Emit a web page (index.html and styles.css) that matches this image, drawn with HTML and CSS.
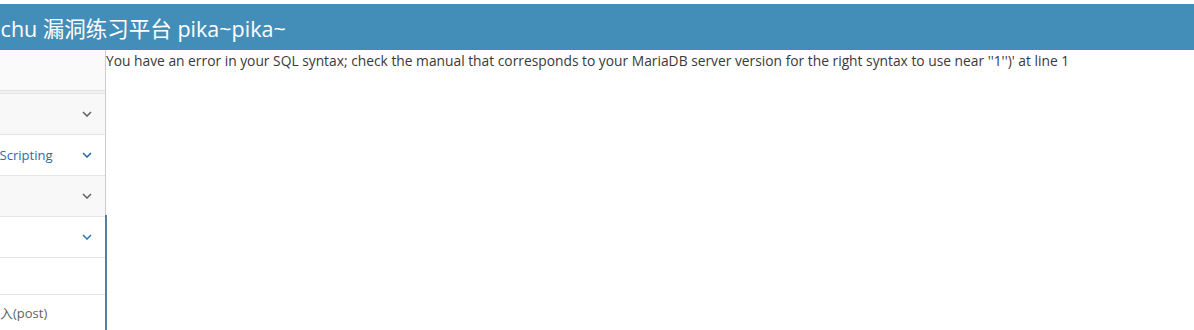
FILE: index.html
```html
<!DOCTYPE html>
<html lang="zh-CN">
<head>
    <meta charset="UTF-8">
    <title>Pikachu 漏洞练习平台</title>
    <link rel="stylesheet" href="styles.css">
</head>
<body>
    <div class="navbar">
        <span class="brand">Pikachu 漏洞练习平台 pika~pika~</span>
    </div>

    <div class="main">
        <div class="sidebar">
            <div class="sidebar-inner">
                <div class="shortcuts"></div>
                <ul class="nav-list">
                    <li><a href="#"><span class="text">暴力破解</span><svg class="arrow" viewBox="0 0 10 6"><path d="M1 1l4 4 4-4"/></svg></a></li>
                    <li class="hover"><a href="#"><span class="text">Cross-Site Scripting</span><svg class="arrow" viewBox="0 0 10 6"><path d="M1 1l4 4 4-4"/></svg></a></li>
                    <li><a href="#"><span class="text">CSRF</span><svg class="arrow" viewBox="0 0 10 6"><path d="M1 1l4 4 4-4"/></svg></a></li>
                    <li class="open"><a href="#"><span class="text">SQL-Inject</span><svg class="arrow" viewBox="0 0 10 6"><path d="M1 1l4 4 4-4"/></svg></a>
                        <ul class="submenu">
                            <li><a href="#">概述</a></li>
                            <li><a href="#">数字型注入(post)</a></li>
                        </ul>
                    </li>
                </ul>
            </div>
        </div>

        <div class="content">
            You have an error in your SQL syntax; check the manual that corresponds to your MariaDB server version for the right syntax to use near ''1'')' at line 1
        </div>
    </div>
</body>
</html>
```

FILE: styles.css
```css
body {
    margin: 0;
    background: #fff;
    font-family: "Open Sans", "Noto Sans CJK SC", sans-serif;
    font-size: 13.8px;
    color: #393939;
    overflow: hidden;
}
.navbar {
    margin-top: 4px;
    height: 46px;
    background: #438eb9;
    color: #fff;
    display: flex;
    align-items: center;
    overflow: hidden;
}
.brand {
    font-size: 21.5px;
    margin-left: -41px;
    white-space: nowrap;
}
.main {
    display: flex;
    position: relative;
}
/* blue bar of the active (open) menu */
.main::after {
    content: "";
    position: absolute;
    left: 105px;
    top: 165px;
    bottom: 0;
    width: 2px;
    background: #4f80a6;
}
.sidebar {
    width: 105px;
    flex-shrink: 0;
    overflow: hidden;
    background: #f2f2f2;
    border-right: 1px solid #ccc;
    height: 280px;
    font-size: 13px;
}
.sidebar-inner {
    width: 190px;
    margin-left: -85px;
}
.shortcuts {
    height: 40px;
    background: #fafafa;
    border-bottom: 1px solid #e0e0e0;
    margin-bottom: 2px;
}
.nav-list {
    list-style: none;
    margin: 0;
    padding: 0;
}
.nav-list > li {
    border-top: 1px solid #e5e5e5;
}
.nav-list > li > a {
    display: flex;
    align-items: center;
    height: 40px;
    padding-left: 21px;
    background: #f8f8f8;
    color: #585858;
    text-decoration: none;
    white-space: nowrap;
}
.nav-list .text {
    flex: 1;
}
.arrow {
    width: 10px;
    height: 6px;
    margin-right: 13px;
    fill: none;
    stroke: #666;
    stroke-width: 1.6;
}
.nav-list > li.hover > a {
    background: #fff;
    color: #266cad;
}
.nav-list > li.hover .arrow {
    stroke: #266cad;
}
.nav-list > li.open > a {
    background: #fff;
    color: #2b7dbc;
}
.nav-list > li.open > a .arrow {
    stroke: #2b7dbc;
}
.submenu {
    list-style: none;
    margin: 0;
    padding: 0;
    background: #fff;
}
.submenu li {
    border-top: 1px solid #e4e4e4;
}
.submenu a {
    display: block;
    height: 36px;
    line-height: 36px;
    padding-left: 33px;
    color: #616161;
    text-decoration: none;
    white-space: nowrap;
}
.content {
    flex: 1;
    line-height: 19px;
    padding-top: 1px;
    white-space: nowrap;
}
```
